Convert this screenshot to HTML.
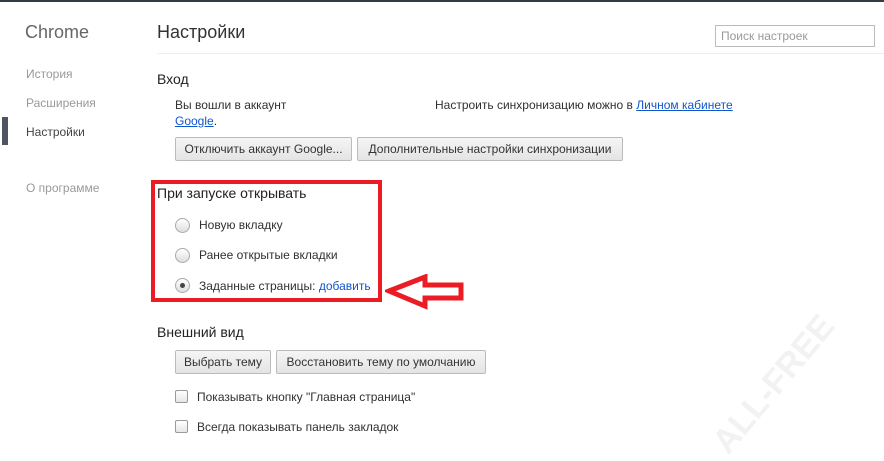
<!DOCTYPE html>
<html><head><meta charset="utf-8"><style>
body{margin:0;width:884px;height:449px;background:#fff;position:relative;overflow:hidden;font-family:"Liberation Sans","Noto Sans CJK SC",sans-serif;font-size:12px;color:#303030}
.a{position:absolute;white-space:nowrap}
.nav{color:#999;font-size:12px}
.btn{position:absolute;border:1px solid #bbb;border-radius:2px;background:linear-gradient(#f5f5f5,#e4e4e4);font-size:12px;color:#333;line-height:22px;text-align:center;box-sizing:border-box;height:24px}
.h{font-size:14px;color:#222}
.radio{position:absolute;width:13px;height:13px;border:1px solid #aaa;border-radius:50%;background:linear-gradient(#fff,#ddd)}
.cb{position:absolute;width:11px;height:11px;border:1px solid #999;border-radius:2px;background:linear-gradient(#fff,#e6e6e6)}
a{color:#15c;text-decoration:underline}
</style></head><body>
<div class="a" style="left:0;top:0;width:884px;height:2px;background:#333a48"></div>
<div class="a" style="left:25px;top:22px;font-size:18px;color:#666">Chrome</div>
<div class="a nav" style="left:26px;top:67px">История</div>
<div class="a nav" style="left:26px;top:96px">Расширения</div>
<div class="a" style="left:2px;top:117px;width:6px;height:28px;background:#4e5561"></div>
<div class="a" style="left:26px;top:125px;color:#444">Настройки</div>
<div class="a nav" style="left:26px;top:181px">О программе</div>
<div class="a" style="left:157px;top:22px;font-size:18px;color:#333">Настройки</div>
<div class="a" style="left:157px;top:53px;width:727px;height:1px;background:#eee"></div>
<div class="a" style="left:715px;top:25px;width:160px;height:22px;border:1px solid #bbb;box-sizing:border-box;color:#999;padding-left:5px;line-height:20px">Поиск настроек</div>
<div class="a h" style="left:157px;top:71px">Вход</div>
<div class="a" style="left:175px;top:98px">Вы вошли в аккаунт</div>
<div class="a" style="left:175px;top:114px"><a>Google</a>.</div>
<div class="a" style="left:435px;top:98px">Настроить синхронизацию можно в <a>Личном кабинете</a></div>
<div class="btn" style="left:175px;top:137px;width:177px">Отключить аккаунт Google...</div>
<div class="btn" style="left:357px;top:137px;width:266px">Дополнительные настройки синхронизации</div>
<div class="a" style="left:151px;top:180px;width:231px;height:122px;border:4px solid #ec1c24;box-sizing:border-box"></div>
<div class="a h" style="left:157px;top:185px">При запуске открывать</div>
<div class="radio" style="left:175px;top:218px"></div><div class="a" style="left:199px;top:218px">Новую вкладку</div>
<div class="radio" style="left:175px;top:248px"></div><div class="a" style="left:199px;top:248px">Ранее открытые вкладки</div>
<div class="radio" style="left:175px;top:278px"><div style="position:absolute;left:4px;top:4px;width:5px;height:5px;border-radius:50%;background:#444"></div></div><div class="a" style="left:199px;top:279px">Заданные страницы: <a style="text-decoration:none">добавить</a></div>
<svg class="a" style="left:385px;top:274px" width="82" height="36"><polygon points="4,17 40,3 40,11 76,11 76,24 40,24 40,32" fill="none" stroke="#ec1c24" stroke-width="5" stroke-linejoin="miter"/></svg>
<div class="a h" style="left:157px;top:324px">Внешний вид</div>
<div class="btn" style="left:175px;top:350px;width:96px">Выбрать тему</div>
<div class="btn" style="left:276px;top:350px;width:210px">Восстановить тему по умолчанию</div>
<div class="cb" style="left:175px;top:390px"></div><div class="a" style="left:197px;top:390px">Показывать кнопку "Главная страница"</div>
<div class="cb" style="left:175px;top:420px"></div><div class="a" style="left:197px;top:420px">Всегда показывать панель закладок</div>
<div class="a" style="left:690px;top:365px;transform:rotate(-50deg);font-size:34px;font-weight:bold;color:#f2f2f2">ALL-FREE</div>
</body></html>
